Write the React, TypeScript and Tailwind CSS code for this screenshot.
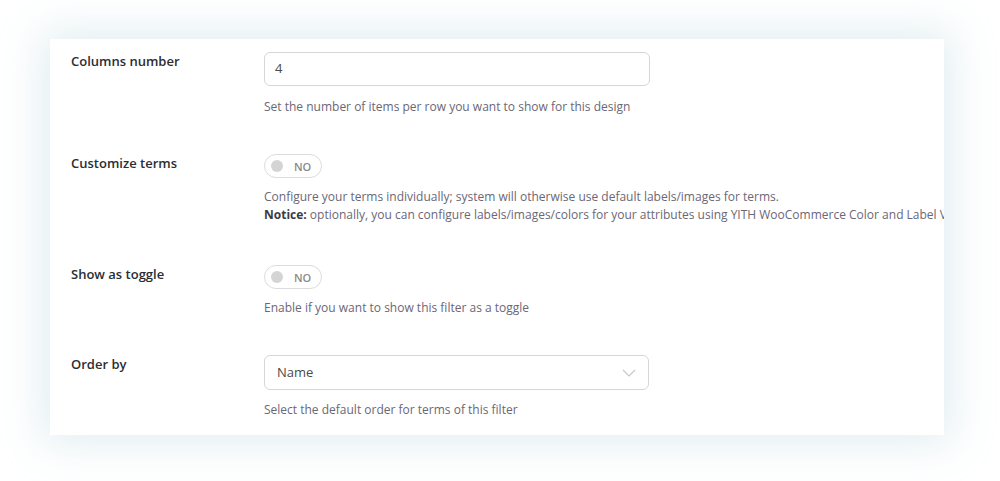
import React from 'react'

const FONT = { fontFamily: '"Open Sans", "Noto Sans", sans-serif' }

function Toggle() {
  return (
    <div className="inline-flex items-center h-[24px] w-[58px] rounded-full border border-[#dcdcdc] bg-white pl-[6px] gap-[11px]">
      <span className="block w-[12px] h-[12px] rounded-full bg-[#d4d4d4]" />
      <span className="text-[11px] font-semibold text-[#8a8a8a] leading-none">NO</span>
    </div>
  )
}

function Row({ label, children }: { label: string; children: React.ReactNode }) {
  return (
    <div className="flex">
      <div className="w-[193px] shrink-0 text-[13px] leading-[18px] font-semibold text-[#2a2d33]">{label}</div>
      <div className="flex flex-col items-start min-w-0">{children}</div>
    </div>
  )
}

export default function App() {
  return (
    <main className="w-[1000px] h-[481px] bg-white pt-[39px] pl-[50px]" style={FONT}>
      <div className="w-[894px] h-[396px] bg-white overflow-hidden shadow-[0_0_40px_8px_rgba(150,195,208,0.28)] pt-[13px] pl-[21px] flex flex-col gap-[38px]">
        <Row label="Columns number">
          <div className="w-[386px] h-[34px] rounded-[6px] border border-[#d6d6d6] flex items-center px-[10px] text-[13px] text-[#4a4a4a]">
            4
          </div>
          <p className="mt-[12px] text-[12px] leading-[18px] text-[#6b6775] whitespace-nowrap">
            Set the number of items per row you want to show for this design
          </p>
        </Row>

        <Row label="Customize terms">
          <Toggle />
          <div className="mt-[10px] mb-[3px] text-[12px] leading-[18px] text-[#6b6775] whitespace-nowrap">
            <p>Configure your terms individually; system will otherwise use default labels/images for terms.</p>
            <p>
              <span className="font-bold text-[#3c3a42]">Notice:</span> optionally, you can configure labels/images/colors for your attributes using YITH WooCommerce Color and Label Variations
            </p>
          </div>
        </Row>

        <Row label="Show as toggle">
          <Toggle />
          <p className="mt-[10px] text-[12px] leading-[18px] text-[#6b6775] whitespace-nowrap">
            Enable if you want to show this filter as a toggle
          </p>
        </Row>

        <Row label="Order by">
          <div className="w-[385px] h-[35px] rounded-[6px] border border-[#d6d6d6] flex items-center justify-between pl-[12px] pr-[12px] text-[13px] text-[#4a4a4a]">
            <span>Name</span>
            <svg width="14" height="8" viewBox="0 0 14 8" fill="none">
              <path d="M1 1l6 6 6-6" stroke="#c8c8c8" strokeWidth="1.2" />
            </svg>
          </div>
          <p className="mt-[11px] text-[12px] leading-[18px] text-[#6b6775] whitespace-nowrap">
            Select the default order for terms of this filter
          </p>
        </Row>
      </div>
    </main>
  )
}
